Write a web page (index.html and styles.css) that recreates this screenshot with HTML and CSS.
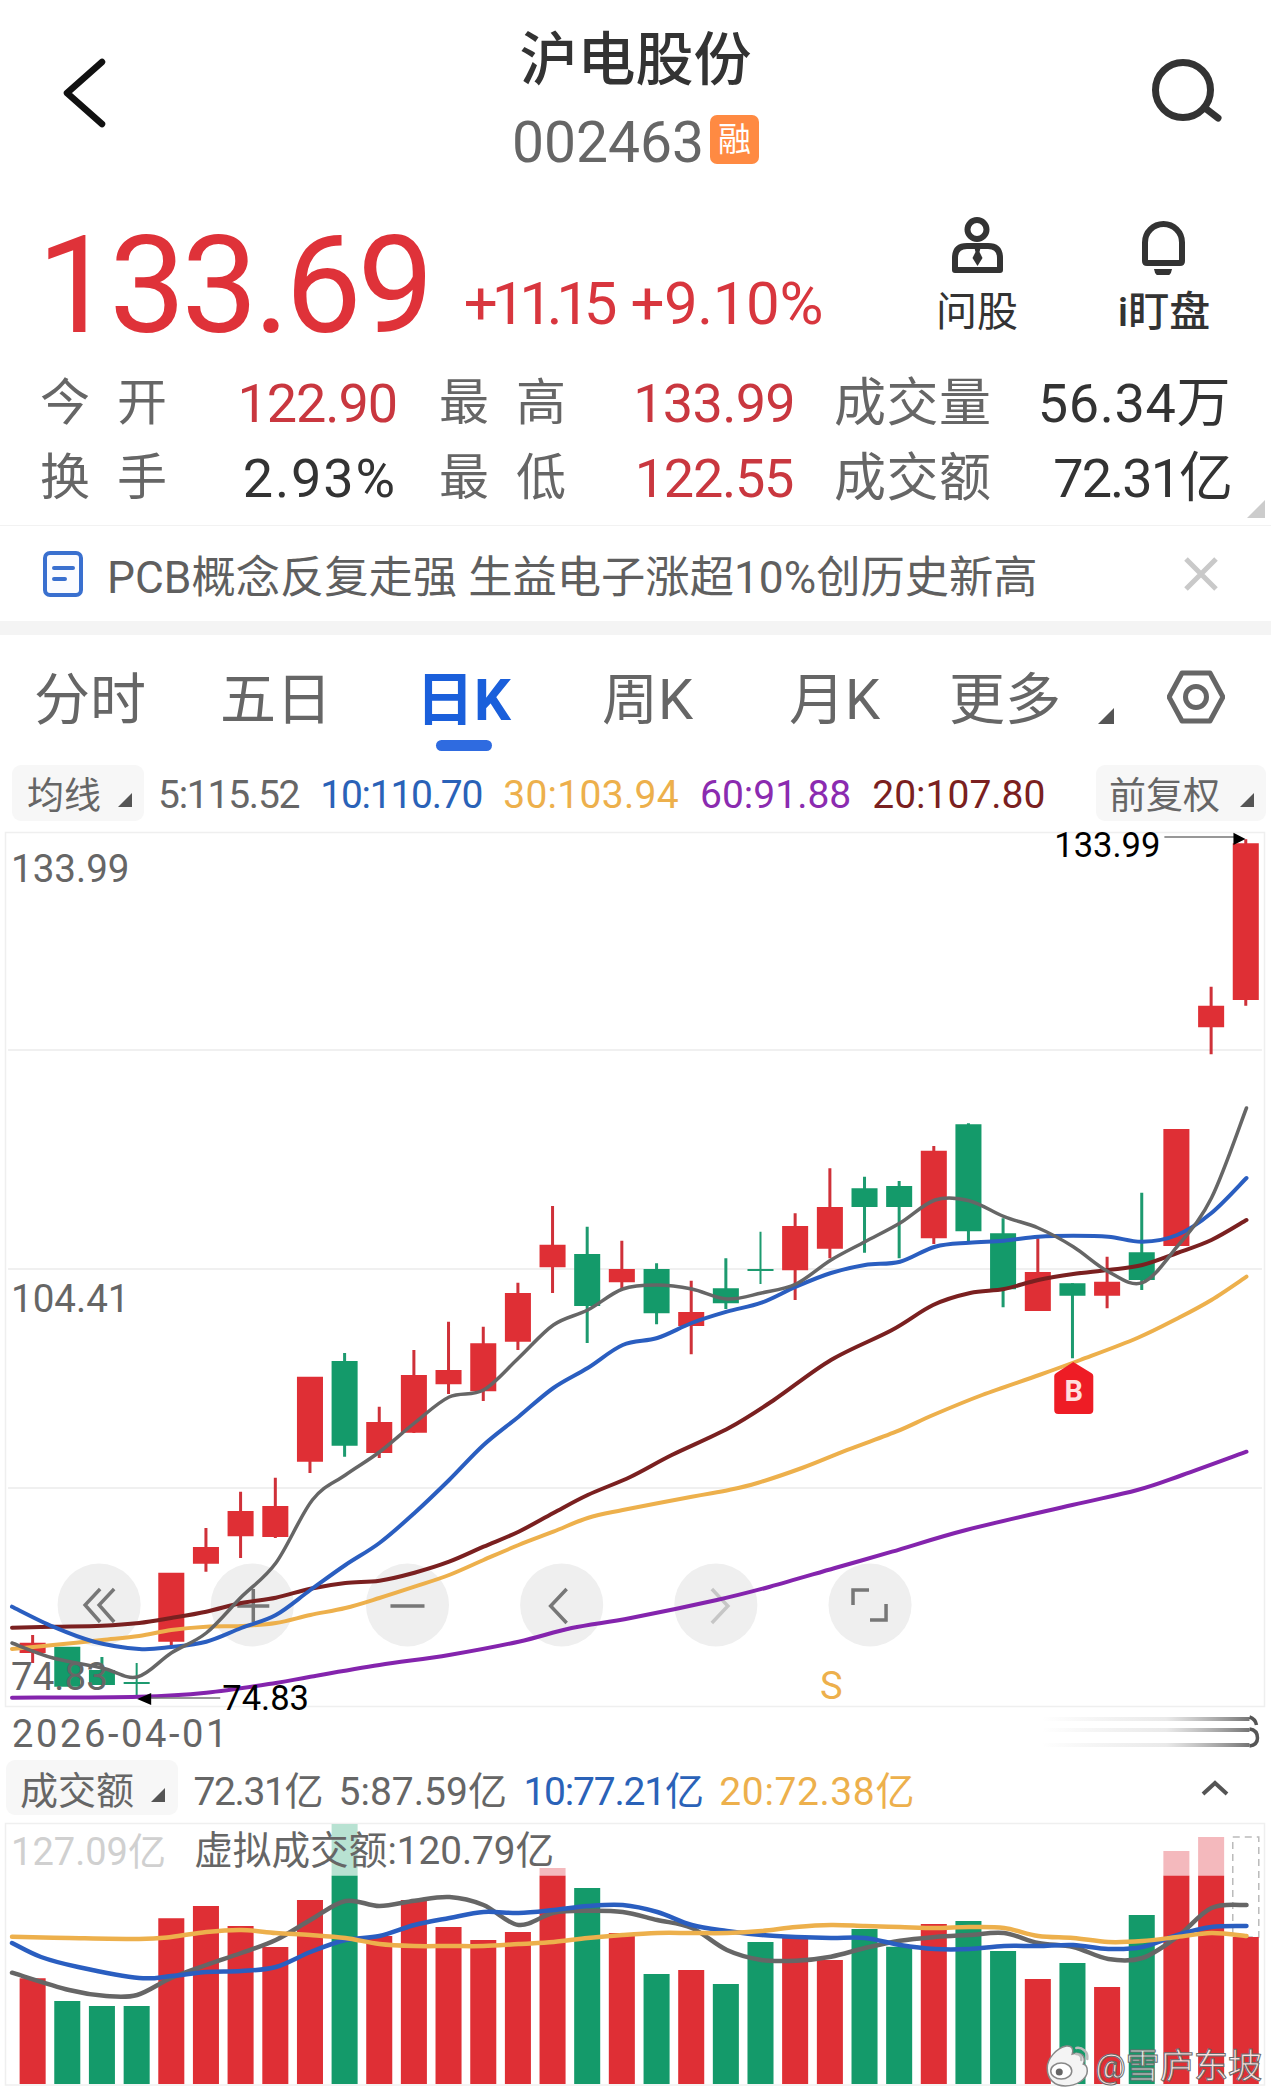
FILE: index.html
```html
<!DOCTYPE html>
<html lang="zh-CN">
<head>
<meta charset="utf-8">
<title>沪电股份 002463</title>
<link rel="stylesheet" href="styles.css">
</head>
<body>
<main class="page">
  <header class="topbar">
    <svg class="back" viewBox="0 0 48 72"><path d="M41 5 6 36l35 31"/></svg>
    <div class="identity">
      <h1 class="name">沪电股份</h1>
      <div class="code-row"><span class="code">002463</span><span class="tag">融</span></div>
    </div>
    <svg class="search" viewBox="0 0 74 66"><circle cx="34" cy="32" r="27.5"/><path d="M56 50 69 60"/></svg>
  </header>

  <section class="quote">
    <div class="price">133.69</div>
    <div class="change"><span class="chg-abs">+11.15</span><span class="chg-pct">+9.10%</span></div>
    <div class="actions">
      <div class="action">
        <svg class="action-icon" viewBox="0 0 60 60"><circle cx="30" cy="14.500" r="9.500" class="ln"/><path class="ln" d="M8 55V43q0-12 12-12h21q12 0 12 12v12z"/><path class="fl" d="M27 31h7l-1.500 6 3 6-5 8-5-8 3-6z"/></svg>
        <span>问股</span>
      </div>
      <div class="action">
        <svg class="action-icon" viewBox="0 0 60 60"><path class="ln" d="M11 46V27.500a18.500 18.500 0 0 1 37 0V46q0 2-2 2H13q-2 0-2-2z"/><path class="fl" d="M20 54h18q-1 8-9 8t-9-8z"/></svg>
        <span class="strong">i盯盘</span>
      </div>
    </div>
  </section>

  <section class="stats">
    <div class="stat"><span class="lab">今 开</span><span class="val up sp-a">122.90</span></div>
    <div class="stat"><span class="lab">最 高</span><span class="val up sp-b">133.99</span></div>
    <div class="stat"><span class="lab wide">成交量</span><span class="val sp-f">56.34万</span></div>
    <div class="stat"><span class="lab">换 手</span><span class="val sp-d">2.93%</span></div>
    <div class="stat"><span class="lab">最 低</span><span class="val up sp-c">122.55</span></div>
    <div class="stat"><span class="lab wide">成交额</span><span class="val sp-e">72.31亿</span></div>
    <span class="corner"></span>
  </section>

  <section class="banner">
    <svg class="doc" viewBox="0 0 40 46"><rect x="2" y="2" width="36" height="42" rx="5"/><path d="M11 17h19M11 28h11"/></svg>
    <span class="news">PCB概念反复走强 生益电子涨超10%创历史新高</span>
    <svg class="close" viewBox="0 0 36 34"><path d="M3 2l30 30M33 2 3 32"/></svg>
  </section>
  <div class="band"></div>

  <nav class="tabs">
    <span class="tab">分时</span>
    <span class="tab">五日</span>
    <span class="tab active">日K</span>
    <span class="tab">周K</span>
    <span class="tab">月K</span>
    <span class="tab">更多</span>
    <span class="caret big"></span>
    <svg class="hex" viewBox="0 0 58 54"><path d="M15 3h28l13 24-13 24H15L2 27z"/><circle cx="29" cy="27" r="10.500"/></svg>
  </nav>

  <div class="ma-row">
    <span class="pick">均线<i class="caret"></i></span>
    <span class="ma c5 sq">5:115.52</span>
    <span class="ma c10 sq">10:110.70</span>
    <span class="ma c30">30:103.94</span>
    <span class="ma c60">60:91.88</span>
    <span class="ma c20">20:107.80</span>
    <span class="pick end">前复权<i class="caret"></i></span>
  </div>

  <svg class="kline" viewBox="0 826 1269.500 930" preserveAspectRatio="none">
    <defs>
      <linearGradient id="fade"><stop offset="0" stop-color="#777" stop-opacity="0"/><stop offset=".6" stop-color="#888" stop-opacity=".18"/><stop offset="1" stop-color="#666" stop-opacity=".9"/></linearGradient>
    </defs>
    <rect class="frame" x="5.500" y="832.500" width="1257.500" height="874"/>
    <path class="grid" d="M8 1050H1260.500M8 1269H1260.500M8 1488H1260.500"/>

    <g class="pad">
      <circle cx="99" cy="1605" r="41.500"/><circle cx="252" cy="1605" r="41.500"/><circle cx="407" cy="1605" r="41.500"/><circle cx="561" cy="1605" r="41.500"/><circle cx="715" cy="1605" r="41.500"/><circle cx="869" cy="1605" r="41.500"/>
    </g>
    <path class="pad-ico" d="M100 1589 85 1605l15 17M114 1589 99 1605l15 17M253 1589v33M237 1606h32M390 1606h34M566 1589l-16 17 16 17M852 1605v-15h16M885 1604v16h-16"/>
    <path class="pad-ico dim" d="M711 1589l16 17-16 17"/>

    <path class="w-up" d="M32.600 1635V1663M171.100 1641V1646M205.700 1528V1571.700M240.300 1491.700V1558M275 1477.700V1538M309.600 1461V1473M378.800 1406.700V1458M413.400 1350V1433M448 1321.700V1394M482.700 1326.700V1401M517.300 1282.700V1350M551.900 1206V1293M621.100 1240.700V1290M690.400 1280.700V1354.300M794.200 1213.300V1300M828.900 1168.300V1258.300M932.700 1146V1244M1036.600 1238.300V1311M1105.800 1256.700V1308.300M1209.700 986.700V1054.300M1244.300 839.300V1005.700"/>
    <path class="w-dn" d="M101.800 1657V1685M344.200 1353V1456.700M586.500 1226.700V1343M655.800 1263.300V1324.300M725 1258.300V1309M863.500 1176.700V1252.700M898.100 1181V1258.300M967.300 1123.300V1241.700M1001.900 1218.300V1307.300M1071.200 1283.300V1358.300M1140.400 1192.700V1290"/>
    <path class="w-thin" d="M136.500 1663V1697M123.500 1683H149.500M759.600 1231.700V1284M746.600 1270H772.600"/>
    <path class="b-up" d="M19.600 1642.700H45.600V1653H19.600ZM158.100 1572.700H184.100V1641.700H158.100ZM192.700 1547H218.700V1563.700H192.700ZM227.300 1511H253.300V1536.300H227.300ZM262 1506H288V1537H262ZM296.600 1376.700H322.600V1461.700H296.600ZM365.800 1422H391.800V1453H365.800ZM400.400 1375H426.400V1432.700H400.400ZM435 1370H461V1384.300H435ZM469.700 1343.300H495.700V1391.300H469.700ZM504.300 1293H530.300V1341.700H504.300ZM538.900 1244.700H564.900V1267.300H538.900ZM608.100 1269H634.100V1282.300H608.100ZM677.400 1312H703.400V1326H677.400ZM781.200 1226H807.200V1270.300H781.200ZM815.900 1207H841.900V1248.700H815.900ZM919.700 1150.700H945.700V1238.300H919.700ZM1023.600 1272H1049.600V1311H1023.600ZM1092.800 1281.700H1118.800V1295.700H1092.800ZM1162 1129H1188V1246H1162ZM1196.700 1005.700H1222.700V1027.300H1196.700ZM1231.300 843.300H1257.300V1000H1231.300Z"/>
    <path class="b-dn" d="M54.200 1646.700H80.200V1686.700H54.200ZM88.800 1670H114.800V1685H88.800ZM331.200 1361H357.200V1445.700H331.200ZM573.500 1254H599.500V1306H573.500ZM642.800 1269H668.800V1313.300H642.800ZM712 1288.300H738V1303.300H712ZM850.500 1188.300H876.500V1207H850.500ZM885.100 1186H911.100V1207H885.100ZM954.300 1124.300H980.300V1231.300H954.300ZM988.900 1233.300H1014.900V1289.300H988.900ZM1058.200 1283.300H1084.200V1295.700H1058.200ZM1127.400 1252.300H1153.400V1280H1127.400Z"/>

    <text class="axis" x="11" y="882">133.99</text>
    <text class="axis" x="11" y="1312">104.41</text>
    <text class="axis" x="11" y="1690">74.83</text>

    <polyline class="ln-60" points="12,1697.700 139,1696.700 206,1692.700 275.500,1683 310,1676.700 379,1665 448.600,1655 518,1641.700 571,1628 630,1618 716,1600 769,1586.700 834,1568 891,1551.700 965,1530 1071,1505 1136,1490 1181,1475 1245,1451.700"/>
    <polyline class="ln-30" points="12,1649 53,1645 102,1640 139,1636 171,1630 206,1626.700 241,1626 275.500,1623 310,1615 345,1608 379,1598 414,1586.700 448.600,1575 483,1560 518,1545 552.700,1531.700 587,1518 622,1510 691,1496.700 728,1490 756.500,1483 801,1468 842,1451.700 895,1431.700 932,1415 981,1395 1038,1375 1079,1360 1136,1338 1177,1318 1210,1300 1245,1276.700"/>
    <polyline class="ln-20" points="12,1627.700 53,1626.700 102,1625.700 139,1623 171,1618 206,1611.700 241,1603 275.500,1597.700 310,1588.700 345,1583 379,1580.700 414,1572.700 448.600,1561.700 483,1546.700 518,1531.700 552.700,1513 587,1495 630,1476.700 671,1455 728,1428 773,1400 830,1360 891,1330 932,1305 969,1293 1003,1289 1037,1280 1072,1274 1107,1270 1141,1265 1175.700,1253 1210,1240 1245,1220"/>
    <polyline class="ln-10" points="12,1606.700 53,1626.700 94,1641.700 139,1649 171,1647 206,1641.700 241,1628 275.500,1615 310,1590 345,1565 379,1543 414,1513 448.600,1480 483,1445 518,1416.700 552.700,1388 587,1368 622,1345 656.500,1338 691,1323 726,1311.700 760.600,1302.700 795,1286.700 830,1273 864,1265 899,1261.700 934,1246.700 968,1242.700 1003,1240.700 1037,1236.700 1072,1235.700 1107,1236.700 1141,1241.700 1175.700,1235 1210,1213 1245,1178"/>
    <polyline class="ln-5" points="12,1643 53,1658 102,1668 137,1677 171,1653 206,1633 241,1597 275.500,1563 312,1500 345,1475 379,1452 414,1423 448.600,1397 483,1390 518,1358 552.700,1325 587,1310 622,1289 656.500,1285 691,1289 726,1299 760.600,1293 795,1284 830,1260 864,1241.700 899,1223 934,1200 968,1200.700 1003,1216.700 1037,1228 1072,1246.700 1107,1271.700 1141,1282.700 1175.700,1246.700 1210,1198 1245,1108"/>

    <path class="lead" d="M1163 837H1234M151 1698H220"/>
    <path class="arrow" d="M1232 832.700 1244 839 1232 845ZM151 1693 137 1699 151 1705Z"/>
    <text class="mark" x="1053" y="857">133.99</text>
    <text class="mark" x="222" y="1710">74.83</text>

    <path class="tag-b" d="M1072 1362 1090 1373Q1092 1374 1092 1376V1410Q1092 1414 1088 1414H1057Q1053 1414 1053 1410V1376Q1053 1374 1055 1373Z"/>
    <text class="tag-b-t" x="1072.500" y="1401">B</text>
    <text class="sell" x="819" y="1699">S</text>

    <text class="date" x="12" y="1747">2026-04-01</text>
    <path class="smear" d="M1040 1719H1248M1040 1730H1248M1040 1745H1248"/>
    <path class="smear-end" d="M1248 1717Q1254 1719 1255 1725M1248 1729Q1256 1730 1256 1738Q1256 1745 1248 1746"/>
  </svg>

  <div class="vol-row">
    <span class="pick vol">成交额<i class="caret"></i></span>
    <span class="ma c5 v-a">72.31亿</span>
    <span class="ma c5">5:87.59亿</span>
    <span class="ma c10 v-c">10:77.21亿</span>
    <span class="ma c30 v-d">20:72.38亿</span>
    <svg class="fold" viewBox="0 0 28 16"><path d="M2 14 14 3l12 11"/></svg>
  </div>

  <svg class="volume" viewBox="0 1820 1269.500 276" preserveAspectRatio="none">
    <rect class="frame" x="5.500" y="1823.500" width="1257.500" height="261.500"/>
    <path class="g-up" d="M1162 1851H1188V1876H1162ZM1196.700 1837H1222.700V1876H1196.700ZM538.900 1868H564.900V1876H538.900Z"/>
    <path class="g-dn" d="M331.200 1824H357.200V1876H331.200Z"/>
    <rect class="dash" x="1231.300" y="1837" width="26" height="100"/>
    <path class="b-up" d="M19.600 1978.300H45.600V2084H19.600ZM158.100 1918.300H184.100V2084H158.100ZM192.700 1906H218.700V2084H192.700ZM227.300 1926H253.300V2084H227.300ZM262 1947H288V2084H262ZM296.600 1900H322.600V2084H296.600ZM365.800 1936H391.800V2084H365.800ZM400.400 1900H426.400V2084H400.400ZM435 1927H461V2084H435ZM469.700 1940H495.700V2084H469.700ZM504.300 1932H530.300V2084H504.300ZM538.900 1875.700H564.900V2084H538.900ZM608.100 1933H634.100V2084H608.100ZM677.400 1970H703.400V2084H677.400ZM781.200 1936H807.200V2084H781.200ZM815.900 1960H841.900V2084H815.900ZM919.700 1924H945.700V2084H919.700ZM1023.600 1979H1049.600V2084H1023.600ZM1092.800 1987H1118.800V2084H1092.800ZM1162 1875.700H1188V2084H1162ZM1196.700 1875.700H1222.700V2084H1196.700ZM1231.300 1937H1257.300V2084H1231.300Z"/>
    <path class="b-dn" d="M54.200 2001H80.200V2084H54.200ZM88.800 2006H114.800V2084H88.800ZM123.500 2006H149.500V2084H123.500ZM331.200 1875.700H357.200V2084H331.200ZM573.500 1888H599.500V2084H573.500ZM642.800 1974H668.800V2084H642.800ZM712 1984H738V2084H712ZM746.600 1942H772.600V2084H746.600ZM850.500 1929H876.500V2084H850.500ZM885.100 1946.700H911.100V2084H885.100ZM954.300 1921H980.300V2084H954.300ZM988.900 1951H1014.900V2084H988.900ZM1058.200 1963H1084.200V2084H1058.200ZM1127.400 1915H1153.400V2084H1127.400Z"/>

    <polyline class="v-5" points="12,1972.700 69,1990 106,1996 137,1995 171,1978 206,1965 241,1953 275.500,1940 310,1920 345,1901 379,1906 414,1900.700 449,1897 483,1905 518,1925 553,1912.700 587,1910.700 622,1912 656.500,1920 691,1928 726,1950 760.600,1960 795,1960.700 830,1956.700 864,1948 899,1940.700 934,1937 968,1935 1003,1933 1037,1943 1072,1947 1107,1959 1141,1958 1176,1936.700 1210,1908 1245,1905"/>
    <polyline class="v-10" points="12,1943 41,1957 78,1967 139,1978 171,1976 206,1972 241,1971 275.500,1967 310,1952 345,1940 379,1936 414,1925 449,1918 483,1912 518,1913 553,1910 587,1906 622,1905 656.500,1912 691,1925 726,1931 760.600,1935 795,1937 830,1938 864,1938 899,1945 934,1949 968,1949 1003,1946 1037,1946 1072,1945 1107,1949 1141,1947 1176,1935 1210,1927 1245,1926"/>
    <polyline class="v-20" points="12,1936.700 69,1938 139,1939 171,1937 206,1932 241,1930 275.500,1933 310,1935 345,1938 379,1944 414,1946 449,1946 483,1946 518,1944 553,1942 587,1938 622,1935 656.500,1933 691,1933 726,1933 760.600,1931 795,1927 830,1925 864,1926 899,1927 934,1928 968,1927 1003,1928 1037,1936 1072,1938 1107,1942 1141,1941 1176,1937 1210,1933 1245,1936"/>

    <text class="max" x="11" y="1865">127.09亿</text>
    <text class="virt" x="194" y="1864">虚拟成交额:120.79亿</text>

    <g class="wb">
      <path class="wb-body" d="M1046 2068c0-9 9-20 19-22 7-1 7 5 6 8 6-2 12 0 12 6 0 2-1 4-1 4 4 1 4 5 4 7 0 8-11 15-22 15s-18-7-18-18z"/>
      <ellipse class="wb-in" cx="1060" cy="2071" rx="10.500" ry="8"/>
      <circle class="wb-eye" cx="1058" cy="2072" r="3.500"/>
      <path class="wb-arc" d="M1075 2048c6-1 12 4 11 11M1075 2054c3 0 6 2 5 6"/>
    </g>
    <text class="sign" x="1094" y="2078">@雪庐东坡</text>
  </svg>
</main>
<script src="chart.js"></script>
</body>
</html>
```

FILE: styles.css
```css
* { box-sizing: border-box; margin: 0; padding: 0; }
html, body { background: #fff; }
body { font-family: Roboto, "Noto Sans CJK SC", sans-serif; color: #333; }
.page { width: 1271px; height: 2096px; overflow: hidden; }
svg { display: block; }

/* header */
.topbar { height: 190px; display: grid; grid-template-columns: 1fr auto 1fr; padding-top: 29px; }
.back { width: 48px; height: 72px; margin: 28px 0 0 61px; }
.back path { fill: none; stroke: #111; stroke-width: 6.5; stroke-linecap: round; stroke-linejoin: round; }
.identity { display: flex; flex-direction: column; align-items: center; }
.name { font-size: 58px; font-weight: 500; line-height: 62px; color: #333; }
.code-row { display: flex; align-items: center; height: 50px; margin-top: 25px; gap: 6px; }
.code { font-size: 57px; line-height: 50px; color: #666; margin-top: 4px; }
.tag { width: 49px; height: 49px; margin-top: -4px; border-radius: 7px; background: #ff8a42; color: #fff; font-size: 33px; line-height: 49px; text-align: center; }
.search { width: 74px; height: 66px; margin: 29px 48px 0 auto; }
.search circle, .search path { fill: none; stroke: #333; stroke-width: 7; stroke-linecap: round; }

/* quote */
.quote { height: 176px; display: flex; align-items: flex-start; padding-left: 37px; }
.price { font-size: 136px; line-height: 134px; letter-spacing: -4.2px; color: #df3239; margin-top: 29px; }
.change { display: flex; gap: 19px; font-size: 60px; line-height: 56px; color: #d8363e; margin: 86px 0 0 34px; white-space: nowrap; }
.chg-abs { letter-spacing: -6.2px; }
.chg-pct { letter-spacing: -.4px; }
.actions { display: flex; gap: 81px; margin-left: auto; margin-right: 54px; margin-top: 25px; }
.action { width: 106px; display: flex; flex-direction: column; align-items: center; font-size: 41px; line-height: 44px; color: #333; }
.action-icon { width: 60px; height: 60px; margin-bottom: 15px; }
.action .ln { fill: none; stroke: #333; stroke-width: 6; stroke-linejoin: round; }
.action .fl { fill: #333; }
.action .strong { font-weight: 500; }

/* stats */
.stats { height: 159px; display: grid; grid-template-columns: 357px 356px 394px; grid-auto-rows: 75px; column-gap: 42px; padding: 0 40px; position: relative; align-content: start; }
.stat { display: flex; justify-content: space-between; align-items: center; }
.lab { width: 127px; font-size: 50px; color: #666; text-align-last: justify; line-height: 75px; }
.lab.wide { width: 157px; font-size: 52px; margin-left: -3px; }
.val { font-size: 54px; color: #333; line-height: 75px; white-space: nowrap; }
.val.up { color: #c9373f; }
.sp-a { letter-spacing: -1.1px; }
.sp-b { letter-spacing: -.7px; }
.sp-c { letter-spacing: -1.3px; margin-right: 2px; }
.sp-d { letter-spacing: 1.9px; }
.sp-e { letter-spacing: -2px; }
.sp-f { letter-spacing: .6px; }
.corner { position: absolute; right: 6px; bottom: 7px; width: 0; height: 0; border-bottom: 18px solid #ccc; border-left: 18px solid transparent; }

/* banner */
.banner { height: 96px; border-top: 1.5px solid #f2f2f2; display: flex; align-items: center; padding: 0 52px 0 43px; }
.doc { width: 40px; height: 46px; flex: none; }
.doc rect { fill: #fbfcff; stroke: #3a70cf; stroke-width: 4; }
.doc path { fill: none; stroke: #3a70cf; stroke-width: 4; stroke-linecap: round; }
.news { font-size: 44.3px; color: #5f5f5f; margin-left: 24px; white-space: nowrap; }
.close { width: 36px; height: 34px; margin-left: auto; }
.close path { fill: none; stroke: #c9c9c9; stroke-width: 5; }
.band { height: 14px; background: #f4f4f4; }

/* tabs */
.tabs { height: 130px; display: grid; grid-template-columns: 186px 196px 186px 187px 160px 149px 69px auto; padding: 37px 0 0 34px; align-items: start; }
.tab { font-size: 56px; line-height: 56px; color: #666; white-space: nowrap; }
.tab.active { color: #1a5fdb; font-weight: 700; font-size: 58px; }
.tab.active::after { content: ""; display: block; width: 56px; height: 11px; margin: 12px 0 0 20px; border-radius: 6px; background: #2f6be0; }
.caret { display: inline-block; width: 0; height: 0; border-bottom: 14px solid #555; border-left: 14px solid transparent; }
.caret.big { margin-top: 36px; border-bottom-width: 16px; border-left-width: 16px; }
.hex { width: 58px; height: 54px; margin-top: -2px; }
.hex path, .hex circle { fill: none; stroke: #666; stroke-width: 5; stroke-linejoin: round; }

/* indicator rows */
.ma-row { height: 56px; display: flex; align-items: center; gap: 21px; padding: 0 5px 0 12px; }
.ma-row .ma { margin-top: 4px; }
.pick { display: flex; align-items: center; justify-content: space-between; height: 56px; width: 132px; padding: 0 12px 0 15px; margin-right: -7px; border-radius: 9px; background: #f7f7f7; color: #666; font-size: 37px; }
.pick .caret { margin-top: 14px; }
.pick.end { width: 170px; margin: 0 0 0 auto; padding-left: 13px; }
.ma { font-size: 39px; white-space: nowrap; }
.ma.sq { letter-spacing: -1.25px; }
.ma.c30 { letter-spacing: .3px; }
.c5 { color: #666; }
.c10 { color: #2a62b8; }
.c30 { color: #edb04c; }
.c60 { color: #8b2bb0; }
.c20 { color: #7a2020; }

/* candlestick */
.kline { width: 1271px; height: 930px; margin-top: 5px; }
.frame { fill: none; stroke: #efefef; stroke-width: 1.5; }
.grid { fill: none; stroke: #ececec; stroke-width: 1.5; }
.pad circle { fill: #efefef; }
.pad-ico { fill: none; stroke: #777; stroke-width: 3.5; }
.pad-ico.dim { stroke: #c6c6c6; }
.w-up { fill: none; stroke: #cf3139; stroke-width: 3; }
.w-dn { fill: none; stroke: #1d9a6f; stroke-width: 3; }
.w-thin { fill: none; stroke: #1d9a6f; stroke-width: 2; }
.b-up { fill: #df2f35; }
.b-dn { fill: #149a6a; }
.axis { font-size: 38.5px; fill: #666; }
.date { font-size: 38px; letter-spacing: 2.6px; fill: #666; }
.mark { font-size: 34.5px; fill: #000; }
.lead { fill: none; stroke: #777; stroke-width: 1.5; }
.arrow { fill: #000; }
.ln-5, .ln-10, .ln-20, .ln-30, .ln-60 { fill: none; stroke-width: 4; stroke-linejoin: round; stroke-linecap: round; }
.ln-5 { stroke: #666; stroke-width: 3.5; }
.ln-10 { stroke: #2a5ec0; }
.ln-20 { stroke: #7a2020; }
.ln-30 { stroke: #edb04c; }
.ln-60 { stroke: #8424ad; }
.tag-b { fill: #ee1c25; }
.tag-b-t { font-size: 29px; font-weight: 700; fill: #ffdede; text-anchor: middle; }
.sell { font-size: 38px; fill: #edb04c; }
.smear { fill: none; stroke: url(#fade); stroke-width: 4; }
.smear-end { fill: none; stroke: #555; stroke-width: 3.5; }

/* volume */
.vol-row { height: 55px; margin-top: 4px; display: flex; align-items: center; gap: 16.5px; padding: 0 42px 0 6px; }
.pick.vol { width: 172px; height: 55px; padding: 0 13px 0 14px; margin-right: -1px; font-size: 38px; }
.v-a { letter-spacing: -1.4px; }
.v-c { letter-spacing: -1.2px; }
.ma.v-d { letter-spacing: .6px; }
.fold { width: 28px; height: 16px; margin-left: auto; }
.fold path { fill: none; stroke: #555; stroke-width: 4; }
.volume { width: 1271px; height: 276px; margin-top: 5px; }
.g-up { fill: #f4b9bd; }
.g-dn { fill: #b8e2d2; }
.dash { fill: none; stroke: #bbb; stroke-width: 1.5; stroke-dasharray: 7 5; }
.v-5, .v-10, .v-20 { fill: none; stroke-width: 4.5; stroke-linejoin: round; stroke-linecap: round; }
.v-5 { stroke: #666; }
.v-10 { stroke: #2a5ec0; }
.v-20 { stroke: #edb04c; }
.max { font-size: 38px; fill: #d0d0d0; }
.virt { font-size: 38.6px; fill: #666; }
.wb-body { fill: #f4f4f4; stroke: #888; stroke-width: 1.500; }
.wb-in { fill: #fff; stroke: #888; stroke-width: 1.500; }
.wb-eye { fill: #666; }
.wb-arc { fill: none; stroke: #bbb; stroke-width: 2.500; stroke-linecap: round; }
.sign { font-size: 34px; fill: rgba(255, 255, 255, .85); stroke: #6b6b6b; stroke-width: 1; }
```

FILE: chart.js
```js
// Turns each moving-average polyline into a smooth curve through the same points.
document.querySelectorAll('svg polyline').forEach(function (line) {
  var p = line.getAttribute('points').trim().split(/\s+/).map(function (pair) {
    return pair.split(',').map(Number);
  });
  var d = 'M' + p[0][0] + ' ' + p[0][1];
  for (var i = 0; i < p.length - 1; i++) {
    var a = p[Math.max(i - 1, 0)], b = p[i], c = p[i + 1], e = p[Math.min(i + 2, p.length - 1)];
    d += 'C' + (b[0] + (c[0] - a[0]) / 6) + ' ' + (b[1] + (c[1] - a[1]) / 6) + ' ' +
         (c[0] - (e[0] - b[0]) / 6) + ' ' + (c[1] - (e[1] - b[1]) / 6) + ' ' + c[0] + ' ' + c[1];
  }
  var path = document.createElementNS('http://www.w3.org/2000/svg', 'path');
  path.setAttribute('class', line.getAttribute('class'));
  path.setAttribute('d', d);
  line.parentNode.replaceChild(path, line);
});
```
